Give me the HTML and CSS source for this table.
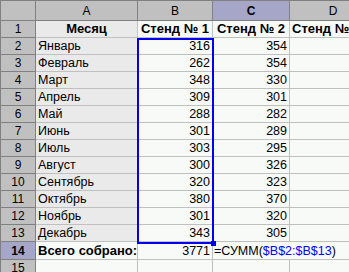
FILE: index.html
```html
<!DOCTYPE html>
<html lang="ru">
<head>
<meta charset="utf-8">
<title>Лист</title>
<link rel="stylesheet" href="styles.css">
</head>
<body>
<div class="sheet">
<table class="grid">
  <colgroup>
    <col class="c-rh"><col class="c-a"><col class="c-b"><col class="c-c"><col class="c-d">
  </colgroup>
  <thead>
    <tr class="hdr">
      <th class="corner"></th><th>A</th><th>B</th><th class="sel">C</th><th>D</th>
    </tr>
  </thead>
  <tbody>
    <tr><th class="rn">1</th><td class="lab bold center">Месяц</td><td class="bold center">Стенд № 1</td><td class="bold center">Стенд № 2</td><td class="bold left">Стенд № 3</td></tr>
    <tr><th class="rn">2</th><td class="lab">Январь</td><td class="num">316</td><td class="num">354</td><td class="num">182</td></tr>
    <tr><th class="rn">3</th><td class="lab">Февраль</td><td class="num">262</td><td class="num">354</td><td class="num">176</td></tr>
    <tr><th class="rn">4</th><td class="lab">Март</td><td class="num">348</td><td class="num">330</td><td class="num">190</td></tr>
    <tr><th class="rn">5</th><td class="lab">Апрель</td><td class="num">309</td><td class="num">301</td><td class="num">168</td></tr>
    <tr><th class="rn">6</th><td class="lab">Май</td><td class="num">288</td><td class="num">282</td><td class="num">155</td></tr>
    <tr><th class="rn">7</th><td class="lab">Июнь</td><td class="num">301</td><td class="num">289</td><td class="num">172</td></tr>
    <tr><th class="rn">8</th><td class="lab">Июль</td><td class="num">303</td><td class="num">295</td><td class="num">181</td></tr>
    <tr><th class="rn">9</th><td class="lab">Август</td><td class="num">300</td><td class="num">326</td><td class="num">164</td></tr>
    <tr><th class="rn">10</th><td class="lab">Сентябрь</td><td class="num">320</td><td class="num">323</td><td class="num">177</td></tr>
    <tr><th class="rn">11</th><td class="lab">Октябрь</td><td class="num">380</td><td class="num">370</td><td class="num">193</td></tr>
    <tr><th class="rn">12</th><td class="lab">Ноябрь</td><td class="num">301</td><td class="num">320</td><td class="num">160</td></tr>
    <tr><th class="rn">13</th><td class="lab">Декабрь</td><td class="num">343</td><td class="num">305</td><td class="num">171</td></tr>
    <tr class="total"><th class="rn sel">14</th><td class="bold">Всего собрано:</td><td class="num">3771</td><td class="formula" colspan="2">=СУММ(<span class="ref">$B$2:$B$13</span>)</td></tr>
    <tr><th class="rn">15</th><td></td><td></td><td></td><td></td></tr>
  </tbody>
</table>
<div class="range"><span class="handle"></span></div>
</div>
</body>
</html>
```
FILE: styles.css
```css
html, body {
  margin: 0;
  padding: 0;
  background: #f7faf7;
  overflow: hidden;
}
.sheet {
  position: relative;
  width: 349px;
  height: 272px;
  overflow: hidden;
}
.grid {
  border-collapse: collapse;
  table-layout: fixed;
  width: 376px;
  font-family: "Liberation Sans", Arial, sans-serif;
  font-size: 12.5px;
  color: #000;
}
.c-rh { width: 35px; }
.c-a { width: 102px; }
.c-b { width: 75px; }
.c-c { width: 77px; }
.c-d { width: 87px; }
.grid th, .grid td {
  border: 1px solid #c0c0c0;
  height: 16px;
  padding: 0 2px;
  white-space: nowrap;
  overflow: hidden;
  line-height: 16px;
}
.grid th {
  background: #c0c0c0;
  border-color: #808080;
  font-weight: normal;
  text-align: center;
  font-size: 12px;
}
.grid .hdr th {
  height: 19px;
  border-top: 1px solid #808080;
}
.grid .total th, .grid .total td {
  height: 17px;
}
.grid th.corner { border-left: 1px solid #808080; }
.grid th.rn { border-left: 1px solid #808080; }
.grid th.sel {
  background: #a6a6c8;
  font-weight: bold;
}
td { background: #f7faf7; }
td.lab {
  background: repeating-conic-gradient(#e4e4e4 0 25%, #efefef 0 50%) 0 0 / 2px 2px;
}
.bold { font-weight: bold; font-size: 13px; }
.center { text-align: center; }
.left { text-align: left; }
.num { text-align: right; }
.grid td.formula {
  overflow: visible;
  padding-left: 1px;
}
.ref { color: #0000ff; }
.range {
  position: absolute;
  left: 137px;
  top: 38px;
  width: 73px;
  height: 202px;
  border: 2px solid #0000ee;
}
.handle {
  position: absolute;
  right: -4px;
  bottom: -4px;
  width: 5px;
  height: 5px;
  background: #0000ee;
}
```
